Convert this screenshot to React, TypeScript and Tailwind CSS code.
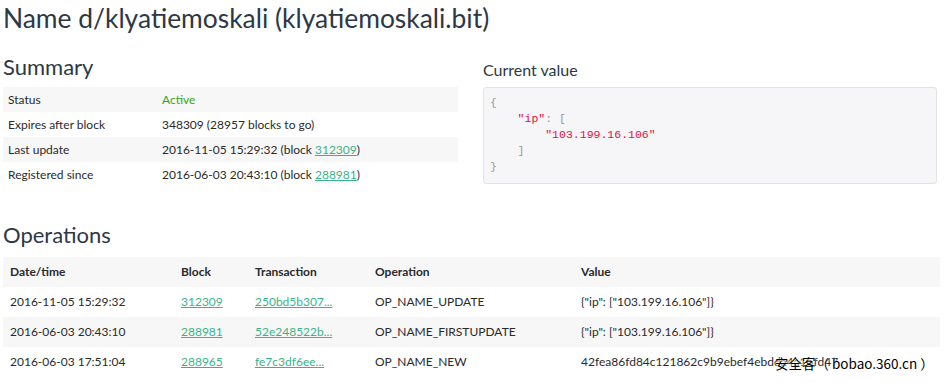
const summary = [
  { label: 'Status', value: <span className="text-[#3aa313]">Active</span> },
  { label: 'Expires after block', value: '348309 (28957 blocks to go)' },
  {
    label: 'Last update',
    value: (
      <>
        2016-11-05 15:29:32 (block <a className="text-[#3bb38a] underline">312309</a>)
      </>
    ),
  },
  {
    label: 'Registered since',
    value: (
      <>
        2016-06-03 20:43:10 (block <a className="text-[#3bb38a] underline">288981</a>)
      </>
    ),
  },
];

const ops = [
  {
    date: '2016-11-05 15:29:32',
    block: '312309',
    tx: '250bd5b307...',
    op: 'OP_NAME_UPDATE',
    value: '{"ip": ["103.199.16.106"]}',
  },
  {
    date: '2016-06-03 20:43:10',
    block: '288981',
    tx: '52e248522b...',
    op: 'OP_NAME_FIRSTUPDATE',
    value: '{"ip": ["103.199.16.106"]}',
  },
  {
    date: '2016-06-03 17:51:04',
    block: '288965',
    tx: 'fe7c3df6ee...',
    op: 'OP_NAME_NEW',
    value: '42fea86fd84c121862c9b9ebef4ebdda4a15fd47',
  },
];

export default function App() {
  return (
    <div
      className="relative w-[945px] h-[383px] overflow-hidden bg-white text-[12px] text-[#2a2a2a]"
      style={{ fontFamily: 'Lato, "Open Sans", sans-serif' }}
    >
      <div className="pl-[3px] pr-[8px]">
        <h1 className="text-[26.4px] leading-[34px] text-[#2c3846] pt-[1px]">
          Name d/klyatiemoskali (klyatiemoskali.bit)
        </h1>

        <div className="flex gap-[25px] mt-[15px]">
          {/* Summary */}
          <div className="w-[455px]">
            <h2 className="text-[22px] leading-[30px] text-[#2c3846] mt-[2px] mb-[5px]">Summary</h2>
            <table className="w-full border-collapse">
              <tbody>
                {summary.map((row, i) => (
                  <tr key={row.label} className={i % 2 === 0 ? 'bg-[#f7f7f7]' : ''}>
                    <td className="w-[159px] h-[25px] pl-[5px] py-0">{row.label}</td>
                    <td className="h-[25px] py-0">{row.value}</td>
                  </tr>
                ))}
              </tbody>
            </table>
          </div>

          {/* Current value */}
          <div className="w-[454px]">
            <h3 className="text-[16px] leading-[22px] text-[#2c3846] mt-[9px] mb-[6px]">Current value</h3>
            <pre
              className="h-[97px] rounded-[3px] border border-[#e3e3e6] bg-[#f6f6f8] pl-[6px] pt-[7px] text-[11.5px] leading-[16px] text-[#999]"
              style={{ fontFamily: '"Liberation Mono", "DejaVu Sans Mono", monospace' }}
            >
              {'{\n    '}
              <span className="text-[#dd1144]">"ip"</span>
              {': [\n        '}
              <span className="text-[#dd1144]">"103.199.16.106"</span>
              {'\n    ]\n}'}
            </pre>
          </div>
        </div>

        {/* Operations */}
        <h2 className="text-[22px] leading-[30px] text-[#2c3846] mt-[33px] mb-[7px]">Operations</h2>
        <table className="w-[937px] border-collapse">
          <thead>
            <tr className="bg-[#f7f7f7] text-left font-bold">
              <th className="h-[30px] pl-[7px] w-[178px]">Date/time</th>
              <th className="w-[74px]">Block</th>
              <th className="w-[120px]">Transaction</th>
              <th className="w-[206px]">Operation</th>
              <th>Value</th>
            </tr>
          </thead>
          <tbody>
            {ops.map((o, i) => (
              <tr key={o.block} className={i % 2 === 1 ? 'bg-[#f7f7f7]' : ''}>
                <td className="h-[30px] pl-[7px]">{o.date}</td>
                <td>
                  <a className="text-[#3bb38a] underline">{o.block}</a>
                </td>
                <td>
                  <a className="text-[#3bb38a] underline">{o.tx}</a>
                </td>
                <td>{o.op}</td>
                <td>{o.value}</td>
              </tr>
            ))}
          </tbody>
        </table>
      </div>

      {/* watermark */}
      <div
        className="absolute left-[775px] top-[353px] text-[13.5px] text-black"
        style={{
          fontFamily: '"Noto Sans CJK SC", sans-serif',
          textShadow: '0 0 2px #fff, 0 0 2px #fff',
        }}
      >
        安全客（ bobao.360.cn ）
      </div>
    </div>
  );
}
